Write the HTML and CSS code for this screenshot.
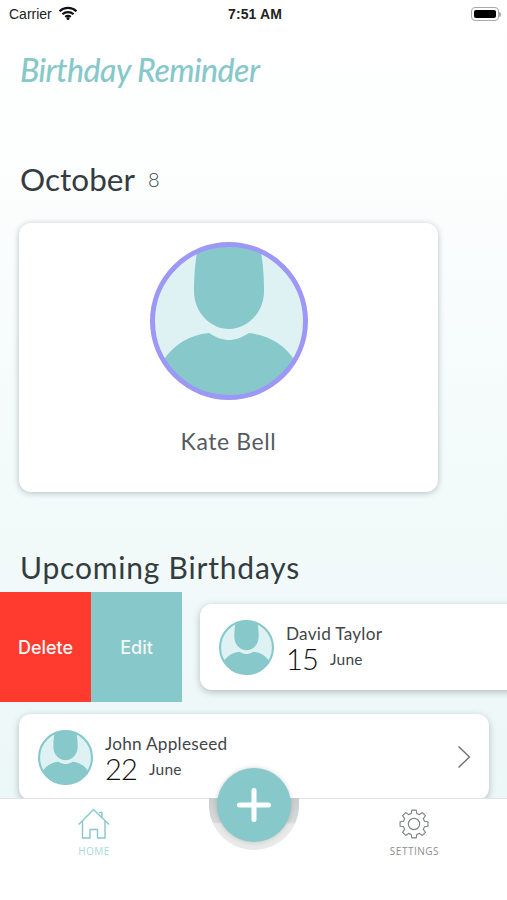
FILE: index.html
```html
<!DOCTYPE html>
<html lang="en">
<head>
<meta charset="utf-8">
<title>Birthday Reminder</title>
<link rel="stylesheet" href="styles.css">
</head>
<body>
<svg class="defs" width="0" height="0" aria-hidden="true">
  <defs>
    <clipPath id="avatar-clip"><circle r="78"/></clipPath>
    <g id="avatar" clip-path="url(#avatar-clip)">
      <circle r="78" fill="#dff2f3"/>
      <path fill="#87c8ca" d="M-29 -85C-32 -70 -35 -55 -35 -30C-35 -8 -18 8 0 8C18 8 35 -8 35 -30C35 -55 32 -70 29 -85Z"/>
      <path fill="#87c8ca" d="M-20 12C-12 17 -6 19 0 19C6 19 12 17 20 12C40 14 56 24 66 40V90H-66V40C-56 24 -40 14 -20 12Z"/>
    </g>
  </defs>
</svg>
<div class="screen">
  <div class="status">
    <div class="status-left">
      <span>Carrier</span>
      <svg class="wifi" viewBox="0 0 20 14"><path d="M1.5 5.2C6.3 .8 13.7 .8 18.5 5.2" /><path d="M4.4 8.2C7.6 5.3 12.4 5.3 15.6 8.2"/><path d="M7.2 10.9C8.8 9.6 11.2 9.6 12.8 10.9"/><circle cx="10" cy="12.4" r="1.5"/></svg>
    </div>
    <span class="time">7:51 AM</span>
    <div class="battery"><span class="battery-body"><span class="battery-fill"></span></span><span class="battery-cap"></span></div>
  </div>
  <main class="content">
    <h1 class="title">Birthday Reminder</h1>
    <div class="month"><h2 class="month-name">October</h2><span class="month-count">8</span></div>
    <section class="hero-card">
      <svg class="hero-avatar" viewBox="-79 -79 158 158"><use href="#avatar"/><circle class="ring ring-hero" r="76.500"/></svg>
      <p class="hero-name">Kate Bell</p>
    </section>
    <h2 class="upcoming">Upcoming Birthdays</h2>
    <div class="swipe-row">
      <button class="action action-delete">Delete</button>
      <button class="action action-edit">Edit</button>
      <article class="person person-swiped">
        <svg class="small-avatar" viewBox="-79 -79 158 158"><use href="#avatar"/><circle class="ring ring-small" r="76"/></svg>
        <div class="person-text">
          <p class="person-name">David Taylor</p>
          <p class="person-date"><span class="day">15</span><span class="mon">June</span></p>
        </div>
      </article>
    </div>
    <article class="person person-full">
      <svg class="small-avatar" viewBox="-79 -79 158 158"><use href="#avatar"/><circle class="ring ring-small" r="76"/></svg>
      <div class="person-text">
        <p class="person-name">John Appleseed</p>
        <p class="person-date"><span class="day">22</span><span class="mon">June</span></p>
      </div>
      <svg class="chevron" viewBox="0 0 14 24"><path d="M1.5 1.5L12.5 12L1.5 22.5"/></svg>
    </article>
  </main>
  <nav class="tabbar">
    <div class="tab tab-active">
      <svg class="tab-icon" viewBox="0 0 32 32"><path d="M.7 16.5L15.5 1.5L31 16.5M24 9.5V4.5H21"/><path d="M4.5 13V30H12V21.500H19.500V30H27V13"/></svg>
      <span>HOME</span>
    </div>
    <div class="tab">
      <svg class="tab-icon" viewBox="-17 -17 34 34"><path d="M-2.98 -11.1L-2.35 -14.8L2.35 -14.8L2.98 -11.1L5.74 -9.96L8.8 -12.13L12.13 -8.8L9.96 -5.74L11.1 -2.98L14.8 -2.35L14.8 2.35L11.1 2.98L9.96 5.74L12.13 8.8L8.8 12.13L5.74 9.96L2.98 11.1L2.35 14.8L-2.35 14.8L-2.98 11.1L-5.74 9.96L-8.8 12.13L-12.13 8.8L-9.96 5.74L-11.1 2.98L-14.8 2.35L-14.8 -2.35L-11.1 -2.98L-9.96 -5.74L-12.13 -8.8L-8.8 -12.13L-5.74 -9.96Z"/><circle r="6"/></svg>
      <span>SETTINGS</span>
    </div>
    <div class="fab-well"></div>
    <button class="fab" aria-label="Add"><svg viewBox="0 0 34 34"><path d="M2.500 17H31.500M17 2.500V31.500"/></svg></button>
  </nav>
</div>
</body>
</html>
```
FILE: styles.css
```css
* { box-sizing: border-box; }
html, body { margin: 0; padding: 0; }
body { font-family: "Lato", "Open Sans", sans-serif; color: #333b3f; }
p, h1, h2 { margin: 0; font-weight: 400; }
.defs { position: absolute; }

.screen {
  width: 507px;
  height: 900px;
  overflow: hidden;
  display: flex;
  flex-direction: column;
  background: linear-gradient(#ffffff 0, #fdfefe 160px, #f5fbfb 400px, #ecf7f7 798px);
}

.status {
  height: 28px;
  flex: none;
  padding: 0 6px 0 9px;
  display: grid;
  grid-template-columns: 1fr auto 1fr;
  align-items: center;
  font-family: "Liberation Sans", sans-serif;
  font-size: 14px;
  color: #222;
}
.status-left { display: flex; align-items: center; gap: 6px; }
.wifi { width: 20px; height: 14px; margin-top: -3px; }
.wifi path { fill: none; stroke: #111; stroke-width: 2.2; }
.wifi circle { fill: #111; }
.time { font-weight: 700; font-size: 14px; letter-spacing: .1px; }
.battery { justify-self: end; display: flex; align-items: center; }
.battery-body { width: 28px; height: 14px; padding: 2px; border: 1.5px solid #a9a9a9; border-radius: 4px; display: block; }
.battery-fill { display: block; height: 100%; background: #000; border-radius: 2px; }
.battery-cap { width: 2px; height: 5px; background: #a9a9a9; border-radius: 0 2px 2px 0; }

.content { flex: 1; min-height: 0; overflow: hidden; }

.title {
  margin: 20px 0 0 20px;
  height: 44px;
  line-height: 44px;
  font-family: "Lato", sans-serif;
  font-style: italic;
  font-size: 32px;
  font-weight: 500;
  letter-spacing: -.5px;
  color: #87c8ca;
}

.month { display: flex; align-items: center; gap: 13px; margin: 65px 0 0 20px; height: 44px; }
.month-name { font-size: 31.500px; color: #343c40; line-height: 44px; }
.month-count { font-size: 20px; font-weight: 300; color: #3f4649; }

.hero-card {
  width: 419px;
  height: 269px;
  margin: 22px 0 0 19px;
  background: #fff;
  border-radius: 12px;
  box-shadow: 0 1px 6px rgba(60, 80, 80, .35);
  display: flex;
  flex-direction: column;
  align-items: center;
  padding-top: 19px;
}
.hero-avatar { width: 158px; height: 158px; flex: none; }
.ring { fill: none; }
.ring-hero { stroke: #9d97f5; stroke-width: 5; }
.ring-small { stroke: #87c8ca; stroke-width: 6; }
.hero-name { margin-top: 26px; font-size: 23px; letter-spacing: .6px; line-height: 30px; color: #555b5f; }

.upcoming { margin: 55px 0 0 20px; height: 40px; font-size: 30px; line-height: 40px; letter-spacing: .8px; color: #343c40; }

.swipe-row { display: flex; align-items: center; height: 110px; margin-top: 5px; }
.action {
  width: 91px;
  height: 110px;
  flex: none;
  border: 0;
  padding: 0;
  color: #f3f6f6;
  font-family: "Inter", sans-serif;
  font-size: 18px;
  font-weight: 500;
}
.action-delete { background: #ff3b30; }
.action-edit { background: #87c8ca; }

.person {
  height: 86px;
  background: #fff;
  border-radius: 12px;
  box-shadow: 0 2px 7px rgba(60, 80, 80, .35);
  display: flex;
  align-items: center;
  padding-left: 19px;
}
.person-swiped { width: 330px; flex: none; margin-left: 18px; }
.person-full { width: 470px; margin: 12px 0 0 19px; padding-right: 18px; }
.small-avatar { width: 55px; height: 55px; flex: none; }
.person-text { margin: 2px 0 0 12px; flex: 1; }
.person-name { font-size: 17.200px; line-height: 21px; letter-spacing: .25px; color: #3f4649; }
.person-date { display: flex; align-items: center; height: 29px; }
.day { font-size: 29px; line-height: 29px; font-weight: 300; letter-spacing: -.8px; color: #111; }
.mon { font-size: 15.500px; line-height: 20px; margin: 1px 0 0 12px; color: #3f4649; letter-spacing: .2px; }
.chevron { width: 14px; height: 24px; flex: none; }
.chevron path { fill: none; stroke: #6d7274; stroke-width: 1.4; }

.tabbar {
  height: 102px;
  flex: none;
  position: relative;
  background: #fff;
  border-top: 1px solid #e0e3e3;
  display: flex;
  justify-content: space-between;
  padding: 9px 68px 0 78px;
  align-items: flex-start;
}
.tab { display: flex; flex-direction: column; align-items: center; gap: 5px; font-family: "Open Sans", sans-serif; font-size: 10px; letter-spacing: .5px; color: #8b8f90; line-height: 12px; }
.tab-icon { width: 32px; height: 32px; fill: none; stroke: #7d8284; stroke-width: 1.2; stroke-linejoin: round; }
.tab-active { color: #a9dbdc; }
.tab-active .tab-icon { stroke: #87c8ca; stroke-width: 1.4; }

.fab-well {
  position: absolute;
  left: 209px;
  top: -1px;
  width: 90px;
  height: 52px;
  border-radius: 0 0 45px 45px;
  background: linear-gradient(#c9cdcd, #d6d9d9 24px, #e8e9e9 26px);
}
.fab {
  position: absolute;
  left: 217px;
  top: -31px;
  width: 74px;
  height: 74px;
  padding: 20px;
  border: 0;
  border-radius: 50%;
  background: #87c8ca;
  box-shadow: 0 0 5px rgba(0, 0, 0, .18);
  display: flex;
}
.fab svg { width: 100%; height: 100%; }
.fab path { fill: none; stroke: #fff; stroke-width: 5; stroke-linecap: round; }
```
